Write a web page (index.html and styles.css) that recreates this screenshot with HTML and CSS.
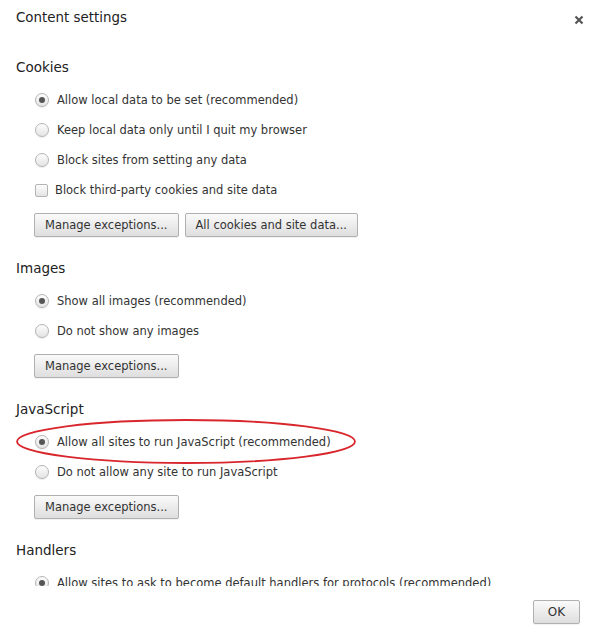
FILE: index.html
```html
<!DOCTYPE html>
<html>
<head>
<meta charset="utf-8">
<link rel="stylesheet" href="styles.css">
</head>
<body>
<div class="dialog">
  <div class="header">
    <h1 class="title">Content settings</h1>
    <button class="close" aria-label="Close">
      <svg width="10" height="10" viewBox="0 0 10 10"><path d="M1.5 1.5 L8.5 8.5 M8.5 1.5 L1.5 8.5" stroke="#555" stroke-width="2.2" stroke-linecap="butt"/></svg>
    </button>
  </div>
  <div class="content">
    <section class="section">
      <h2 class="heading">Cookies</h2>
      <label class="option"><span class="radio checked"></span>Allow local data to be set (recommended)</label>
      <label class="option"><span class="radio"></span>Keep local data only until I quit my browser</label>
      <label class="option"><span class="radio"></span>Block sites from setting any data</label>
      <label class="option cb"><span class="checkbox"></span>Block third-party cookies and site data</label>
      <div class="buttons">
        <button class="btn">Manage exceptions...</button>
        <button class="btn">All cookies and site data...</button>
      </div>
    </section>
    <section class="section">
      <h2 class="heading">Images</h2>
      <label class="option"><span class="radio checked"></span>Show all images (recommended)</label>
      <label class="option"><span class="radio"></span>Do not show any images</label>
      <div class="buttons">
        <button class="btn">Manage exceptions...</button>
      </div>
    </section>
    <section class="section js">
      <h2 class="heading">JavaScript</h2>
      <label class="option"><span class="radio checked"></span>Allow all sites to run JavaScript (recommended)</label>
      <label class="option"><span class="radio"></span>Do not allow any site to run JavaScript</label>
      <div class="buttons">
        <button class="btn">Manage exceptions...</button>
      </div>
      <svg class="ellipse" width="344" height="48" viewBox="0 0 344 48"><ellipse cx="170" cy="23.5" rx="169" ry="21.5" fill="none" stroke="#d8262c" stroke-width="1.8"/></svg>
    </section>
    <section class="section">
      <h2 class="heading">Handlers</h2>
      <label class="option"><span class="radio checked"></span>Allow sites to ask to become default handlers for protocols (recommended)</label>
      <label class="option"><span class="radio"></span>Do not allow any site to handle protocols</label>
    </section>
  </div>
  <div class="footer">
    <button class="btn ok">OK</button>
  </div>
</div>
</body>
</html>
```

FILE: styles.css
```css
* { box-sizing: border-box; }
html, body { margin: 0; padding: 0; background: #fff; }
body {
  font-family: "DejaVu Sans", "Open Sans", sans-serif;
  color: #333;
  font-size: 11.5px;
}
.dialog {
  width: 589px;
  height: 638px;
  display: flex;
  flex-direction: column;
  background: #fff;
}
.header {
  height: 36px;
  display: flex;
  align-items: center;
  justify-content: space-between;
  padding: 0 5px 0 16px;
  flex: none;
}
.title {
  margin: 0;
  font-size: 13.4px;
  font-weight: normal;
  color: #222;
  line-height: 36px;
}
.close {
  border: none;
  background: none;
  padding: 0;
  width: 10px;
  height: 10px;
  margin-top: 4px;
  display: flex;
}
.content {
  height: 550px;
  overflow: hidden;
  padding: 21px 0 0 16px;
  flex: none;
}
.section { position: relative; margin-bottom: 21px; }
.heading {
  margin: 0 0 8px 0;
  font-size: 13.5px;
  font-weight: normal;
  color: #222;
  line-height: 20px;
}
.option {
  display: flex;
  align-items: center;
  height: 30px;
  padding-left: 19px;
  color: #333;
}
.radio {
  width: 14px;
  height: 14px;
  border-radius: 50%;
  border: 1px solid #b4b4b4;
  background: linear-gradient(#fdfdfd, #e4e4e4);
  box-shadow: 0 1px 1px rgba(0,0,0,0.08);
  margin-right: 8px;
  display: flex;
  align-items: center;
  justify-content: center;
  flex: none;
}
.radio.checked::after {
  content: "";
  width: 6px;
  height: 6px;
  border-radius: 50%;
  background: #555;
}
.checkbox {
  width: 13px;
  height: 13px;
  border: 1px solid #b4b4b4;
  border-radius: 2px;
  background: linear-gradient(#fdfdfd, #e4e4e4);
  margin-right: 7px;
  flex: none;
}
.buttons {
  display: flex;
  gap: 6px;
  margin: 8px 0 0 18px;
}
.btn {
  font-family: inherit;
  font-size: 11.5px;
  color: #333;
  height: 24px;
  padding: 0 10px;
  border: 1px solid #b0b0b0;
  border-radius: 2px;
  background: linear-gradient(#fafafa, #dedede);
  box-shadow: 0 1px 0 rgba(0,0,0,0.05);
}
.ellipse {
  position: absolute;
  left: 0;
  top: 19px;
  pointer-events: none;
}
.footer {
  flex: 1;
  display: flex;
  justify-content: flex-end;
  align-items: flex-start;
  padding: 14px 9px 0 0;
}
.ok { width: 47px; padding: 0; font-size: 12px; }
```
